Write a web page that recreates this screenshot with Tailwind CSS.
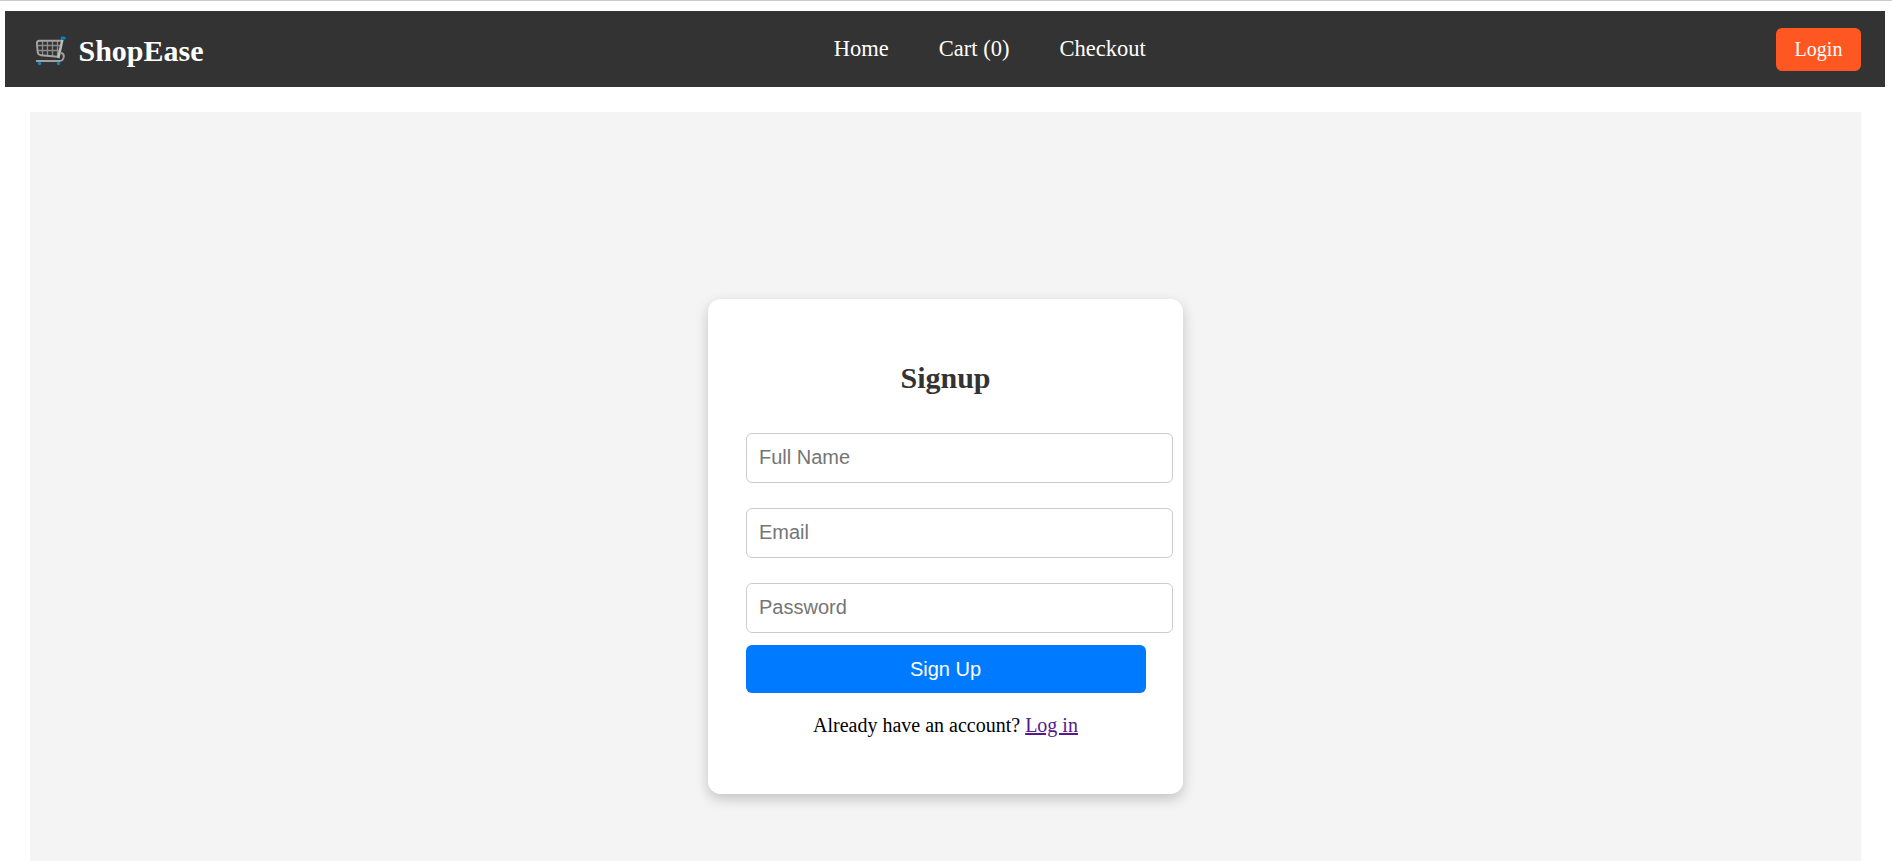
<!DOCTYPE html>
<html lang="en">
<head>
<meta charset="utf-8">
<title>ShopEase</title>
<script src="https://cdn.jsdelivr.net/npm/@tailwindcss/browser@4"></script>
</head>
<body class="h-[861px] overflow-hidden flex flex-col bg-white border-t border-[#ccc] pt-2.5 font-['Liberation_Serif',serif] text-black">
  <header class="ml-[5px] w-[1880px] h-[76px] shrink-0 bg-[#333] text-white flex items-center justify-between pl-[25px] pr-6">
    <div class="flex items-center text-[30px] leading-[34px] font-bold">
      <svg class="w-[30px] h-[30px] ml-[6px] mr-[12.5px] mt-[3px]" viewBox="0 0 30 30" fill="none" aria-hidden="true">
        <path d="M6.500 5v14M11.500 5v14.500M16.500 5v15M21.500 5v15M1.500 9.500h23M2 14.500h21" stroke="#8c8c8c" stroke-width="1.300"/>
        <path d="M26 4.800H3.500Q.8 4.800.9 7.500L1.600 15.500Q1.800 18.800 5 19.200L22 20.800" stroke="#a5a5a5" stroke-width="1.900"/>
        <path d="M25 17Q28 17.500 27.800 20.500Q27.300 25 23.500 25H0" stroke="#a0a0a0" stroke-width="1.900"/>
        <path d="M25.300 3.500L27.600 4L23.500 22.500L21 21.500Z" fill="#bdbdbd"/>
        <path d="M26 1.800L28.300 2.200" stroke="#0288d1" stroke-width="2.700" stroke-linecap="round"/>
        <circle cx="3.500" cy="27.500" r="1.700" fill="#0288d1"/>
        <circle cx="22.500" cy="27.500" r="1.700" fill="#0288d1"/>
      </svg>
      <span class="pt-[3px]">ShopEase</span>
    </div>
    <nav class="flex gap-[50px] text-[22.5px] leading-[26px]">
      <a>Home</a><a>Cart (0)</a><a>Checkout</a>
    </nav>
    <button class="w-[85px] h-[43px] mt-px pb-[2px] bg-[#ff5722] rounded-[6px] text-[20px]">Login</button>
  </header>
  <main class="mt-[25px] ml-[30px] w-[1831px] flex-1 bg-[#f4f4f4] pt-[187px]">
    <form class="ml-[678px] w-[475px] h-[495px] bg-white rounded-[12.5px] shadow-[0_5px_12.5px_rgba(0,0,0,0.2)] px-[38px] pt-[62px]">
      <h2 class="text-[30px] leading-[34px] font-bold text-[#333] text-center mb-[38px]">Signup</h2>
      <div class="w-[427px] flex flex-col gap-[25px] font-['Liberation_Sans',sans-serif] text-[20px]">
        <input type="text" placeholder="Full Name" class="h-[50px] px-3 pb-[2px] border border-[#ccc] rounded-[6px] placeholder:text-[#757575]">
        <input type="email" placeholder="Email" class="h-[50px] px-3 pb-[2px] border border-[#ccc] rounded-[6px] placeholder:text-[#757575]">
        <input type="password" placeholder="Password" class="h-[50px] px-3 pb-[2px] border border-[#ccc] rounded-[6px] placeholder:text-[#757575]">
      </div>
      <button type="button" class="block mt-3 w-[400px] h-12 pr-px bg-[#007bff] rounded-[6px] text-white font-['Liberation_Sans',sans-serif] text-[20px]">Sign Up</button>
      <p class="mt-5 text-[20px] leading-[24px] text-center">Already have an account? <a class="text-[#551a8b] underline decoration-2">Log in</a></p>
    </form>
  </main>
</body>
</html>
